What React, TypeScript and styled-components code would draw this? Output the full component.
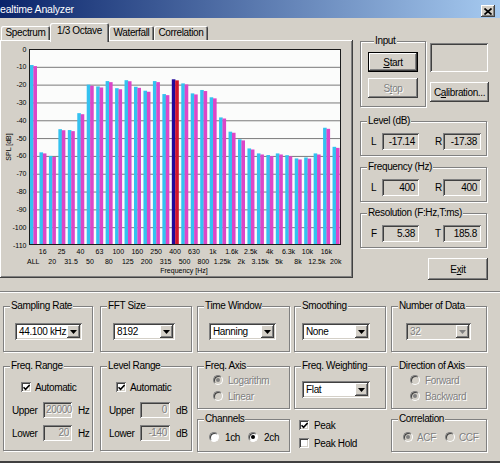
import React from 'react'
import styled, { createGlobalStyle, css } from 'styled-components'

const FONT = `"Liberation Sans", Arial, sans-serif`
const face = '#d4d0c8'
const shade = '#808080'
const dark = '#404040'

const GlobalStyle = createGlobalStyle`
  html, body { margin: 0; padding: 0; background: ${face}; }
  body { font-family: ${FONT}; font-size: 10px; letter-spacing: -0.35px; color: #000; }
  * { box-sizing: border-box; }
`

const raised = css`
  box-shadow: inset -1px -1px 0 ${dark}, inset 1px 1px 0 #fff, inset -2px -2px 0 ${shade};
`
const sunken = css`
  box-shadow: inset 1px 1px 0 ${shade}, inset -1px -1px 0 #fff, inset 2px 2px 0 ${dark}, inset -2px -2px 0 ${face};
`
const grayed = css`
  color: ${shade};
  text-shadow: 1px 1px 0 #fff;
`

const Window = styled.div`
  width: 500px;
  height: 463px;
  overflow: hidden;
  background: ${face};
  display: flex;
  flex-direction: column;
  border-bottom: 2px solid ${dark};
`

const TitleBar = styled.div`
  height: 18px;
  flex: none;
  display: flex;
  align-items: center;
  justify-content: space-between;
  padding-right: 5px;
  background: linear-gradient(to right, #0a246a, #a6caf0);
`

const Title = styled.span`
  color: #fff;
  font-size: 10.5px;
  letter-spacing: -0.2px;
  line-height: 18px;
`

const CloseButton = styled.div`
  width: 14px;
  height: 12px;
  margin-top: 4px;
  background: ${face};
  ${raised};
  display: flex;
  align-items: center;
  justify-content: center;
`

const Main = styled.div`
  height: 273px;
  flex: none;
  display: flex;
`

const TabColumn = styled.div`
  width: 353px;
  flex: none;
  padding-top: 4px;
  display: flex;
  flex-direction: column;
`

const TabStrip = styled.div`
  height: 18px;
  display: flex;
  align-items: flex-end;
  padding-left: 1px;
  position: relative;
  z-index: 1;
`

const Tab = styled.div<{ $active?: boolean; $w: number }>`
  width: ${p => p.$w}px;
  height: ${p => (p.$active ? 19 : 14)}px;
  margin-bottom: ${p => (p.$active ? -2 : 0)}px;
  padding-bottom: ${p => (p.$active ? 3 : 0)}px;
  background: ${face};
  border-radius: 2px 2px 0 0;
  box-shadow: inset 1px 1px 0 #fff, inset -1px 0 0 ${dark}, inset -2px 0 0 ${shade};
  display: flex;
  align-items: center;
  justify-content: center;
  line-height: 12px;
  white-space: nowrap;
`

const TabPanel = styled.div`
  height: 238px;
  padding: 2px;
  background: ${face};
  ${raised};
`

const ChartSvg = styled.svg`
  display: block;
  font-family: ${FONT};
  letter-spacing: 0;
`

const SideColumn = styled.div`
  flex: 1;
  padding: 17px 0 0 7px;
  display: flex;
  flex-direction: column;
`

const InputRow = styled.div`
  display: flex;
  align-items: flex-start;
`

const Stack = styled.div<{ $ml?: number; $pt?: number }>`
  display: flex;
  flex-direction: column;
  align-items: flex-start;
  margin-left: ${p => p.$ml ?? 0}px;
  padding-top: ${p => p.$pt ?? 0}px;
`

const Group = styled.fieldset<{ $w: number; $h: number; $mt?: number; $pl?: number }>`
  margin: ${p => p.$mt ?? 0}px 0 0 0;
  padding: 0 0 0 ${p => p.$pl ?? 0}px;
  min-width: 0;
  width: ${p => p.$w}px;
  height: ${p => p.$h}px;
  border: 1px solid ${shade};
  box-shadow: 1px 1px 0 #fff, inset 1px 1px 0 #fff;
`

const Legend = styled.legend`
  margin-left: 6px;
  padding: 0 1px;
  line-height: 12px;
  font-size: 10px;
  background: ${face};
  white-space: nowrap;
`

const Button = styled.button<{ $w: number; $h: number; $mt?: number; $isDefault?: boolean }>`
  width: ${p => p.$w}px;
  height: ${p => p.$h}px;
  margin-top: ${p => p.$mt ?? 0}px;
  padding: 0;
  border: none;
  font-family: ${FONT};
  font-size: 10px;
  letter-spacing: -0.35px;
  color: #000;
  white-space: nowrap;
  background: ${face};
  ${raised};
  ${p =>
    p.$isDefault &&
    css`
      box-shadow: inset 0 0 0 1px #000, inset -2px -2px 0 ${dark}, inset 2px 2px 0 #fff, inset -3px -3px 0 ${shade};
    `}
  &:disabled {
    ${grayed};
  }
`

const ExitButton = styled(Button)`
  align-self: flex-end;
  margin-right: 12px;
`

const EmptyBox = styled.div`
  width: 58px;
  height: 29px;
  ${sunken};
`

const ReadRow = styled.div`
  display: flex;
  align-items: center;
  padding: 6px 0 0 10px;
`

const ReadLabel = styled.span<{ $w: number; $ml?: number }>`
  width: ${p => p.$w}px;
  margin-left: ${p => p.$ml ?? 0}px;
`

const Readout = styled.div<{ $w: number }>`
  width: ${p => p.$w}px;
  height: 17px;
  line-height: 17px;
  padding: 0 4px;
  text-align: right;
  ${sunken};
`

const Separator = styled.div`
  height: 2px;
  flex: none;
  border-top: 1px solid ${shade};
  border-bottom: 1px solid #fff;
`

const Bottom = styled.div`
  padding: 7px 0 0 3px;
  display: grid;
  grid-template-columns: repeat(5, 97px);
  grid-template-rows: 52px auto;
  row-gap: 8px;
`

const Cell = styled.div`
  display: flex;
  flex-direction: column;
`

const Combo = styled.div<{ $w: number; $ml: number; $mt: number; $off?: boolean }>`
  width: ${p => p.$w}px;
  height: 17px;
  margin: ${p => p.$mt}px 0 0 ${p => p.$ml}px;
  padding: 2px;
  display: flex;
  align-items: center;
  background: ${p => (p.$off ? face : '#fff')};
  ${sunken};
  ${p => p.$off && grayed};
`

const ComboText = styled.span`
  flex: 1;
  padding-left: 2px;
  line-height: 13px;
  white-space: nowrap;
  overflow: hidden;
`

const ComboButton = styled.span`
  width: 13px;
  height: 13px;
  flex: none;
  background: ${face};
  ${raised};
  display: flex;
  align-items: center;
  justify-content: center;
`

const OptionRow = styled.div<{ $pl: number; $mt: number; $gap?: number; $off?: boolean }>`
  height: 12px;
  margin-top: ${p => p.$mt}px;
  padding-left: ${p => p.$pl}px;
  display: flex;
  align-items: center;
  gap: ${p => p.$gap ?? 5}px;
  white-space: nowrap;
  ${p => p.$off && grayed};
`

const OptionText = styled.span<{ $mr?: number }>`
  margin-right: ${p => p.$mr ?? 0}px;
`

const CheckBox = styled.span`
  width: 10px;
  height: 10px;
  flex: none;
  background: #fff;
  ${sunken};
  display: flex;
  align-items: center;
  justify-content: center;
`

const Radio = styled.span<{ $checked?: boolean; $off?: boolean }>`
  position: relative;
  width: 10px;
  height: 10px;
  flex: none;
  border-radius: 50%;
  border: 1px solid;
  border-color: ${shade} #fff #fff ${shade};
  background: ${p => (p.$off ? face : '#fff')};
  box-shadow: inset 1px 1px 0 ${dark};
  &::after {
    content: '';
    display: ${p => (p.$checked ? 'block' : 'none')};
    position: absolute;
    left: 2px;
    top: 2px;
    width: 4px;
    height: 4px;
    border-radius: 50%;
    background: ${p => (p.$off ? shade : '#000')};
  }
`

const EntryRow = styled.div<{ $mt: number }>`
  display: flex;
  align-items: center;
  height: 16px;
  margin-top: ${p => p.$mt}px;
  padding-left: 8px;
`

const EntryLabel = styled.span`
  width: 31px;
`

const Entry = styled.div<{ $w: number }>`
  width: ${p => p.$w}px;
  height: 16px;
  line-height: 16px;
  padding: 0 3px;
  text-align: right;
  ${sunken};
  ${grayed};
`

const Unit = styled.span`
  margin-left: 6px;
`

const Arrow: React.FC<{ off?: boolean }> = ({ off }) => (
  <svg width="7" height="4" viewBox="0 0 7 4">
    <polygon points="0,0 7,0 3.5,4" fill={off ? shade : '#000'} />
  </svg>
)

const Check: React.FC = () => (
  <svg width="7" height="7" viewBox="0 0 7 7">
    <path d="M0.5 3.2 L2.6 5.4 L6.6 1" stroke="#000" strokeWidth="1.6" fill="none" />
  </svg>
)

const Select: React.FC<{ w: number; ml: number; mt: number; value: string; off?: boolean }> = ({ w, ml, mt, value, off }) => (
  <Combo $w={w} $ml={ml} $mt={mt} $off={off}>
    <ComboText>{value}</ComboText>
    <ComboButton>
      <Arrow off={off} />
    </ComboButton>
  </Combo>
)

const bands = [
  'ALL', '16', '20', '25', '31.5', '40', '50', '63', '80', '100', '125', '160', '200', '250', '315', '400', '500',
  '630', '800', '1k', '1.25k', '1.6k', '2k', '2.5k', '3.15k', '4k', '5k', '6.3k', '8k', '10k', '12.5k', '16k', '20k',
]
const levels = [
  -9, -58, -60, -45, -45.5, -36, -20, -21, -18, -22, -17.5, -21.2, -23.4, -18, -25.3, -17, -19.3, -24.9, -23, -27.1,
  -38.4, -46.4, -50.7, -55.8, -58.6, -59.5, -58.6, -59.6, -61.4, -60.9, -58.6, -44.2, -54.9,
]
const marked = 15

const Chart: React.FC = () => {
  const x0 = 29
  const x1 = 341
  const y0 = 49
  const y1 = 245
  const slot = (x1 - x0) / bands.length
  const yOf = (db: number) => y0 + (-db * (y1 - y0)) / 110
  const ticks = Array.from({ length: 12 }, (_, i) => -i * 10)

  return (
    <ChartSvg width={349} height={234} viewBox="2 42 349 234">
      <rect x={x0} y={y0} width={x1 - x0} height={y1 - y0} fill="#fbfcfb" />
      {ticks.slice(1, 11).map(t => (
        <line key={t} x1={x0} x2={x1} y1={yOf(t) + 0.5} y2={yOf(t) + 0.5} stroke="#7a7a7a" strokeWidth="1" />
      ))}
      {levels.map((l, i) => {
        const sx = x0 + slot * i
        const a = yOf(l)
        const b = yOf(l - 0.6)
        return (
          <g key={i}>
            <rect x={sx + 1} y={a} width={3.6} height={y1 - a} fill={i === marked ? '#22089a' : '#34c2f0'} />
            <rect x={sx + 4.4} y={b} width={3.6} height={y1 - b} fill={i === marked ? '#d0142a' : '#dc46c8'} />
          </g>
        )
      })}
      <rect x={x0 + 0.5} y={y0 + 0.5} width={x1 - x0 - 1} height={y1 - y0 - 1} fill="none" stroke="#1c1c1c" />
      {ticks.map(t => (
        <text key={t} x={26.5} y={yOf(t) + 2.5} fontSize="7" textAnchor="end" fill="#000">
          {t}
        </text>
      ))}
      <text transform="translate(11 147) rotate(-90)" fontSize="7" textAnchor="middle" fill="#000">
        SPL [dB]
      </text>
      {bands.map((b, i) => (
        <text
          key={b}
          x={x0 + slot * (i + 0.5) - 0.5}
          y={i % 2 ? 254 : 264}
          fontSize="7"
          textAnchor="middle"
          fill="#000"
        >
          {b}
        </text>
      ))}
      <text x={184} y={273} fontSize="7" textAnchor="middle" fill="#000">
        Frequency [Hz]
      </text>
    </ChartSvg>
  )
}

export default function App() {
  return (
    <>
      <GlobalStyle />
      <Window>
        <TitleBar>
          <Title>ealtime Analyzer</Title>
          <CloseButton>
            <svg width="8" height="7" viewBox="0 0 8 7">
              <path d="M0.5 0.5 L7.5 6.5 M7.5 0.5 L0.5 6.5" stroke="#000" strokeWidth="1.7" />
            </svg>
          </CloseButton>
        </TitleBar>

        <Main>
          <TabColumn>
            <TabStrip>
              <Tab $w={49}>Spectrum</Tab>
              <Tab $w={59} $active>
                1/3 Octave
              </Tab>
              <Tab $w={45}>Waterfall</Tab>
              <Tab $w={54}>Correlation</Tab>
            </TabStrip>
            <TabPanel>
              <Chart />
            </TabPanel>
          </TabColumn>

          <SideColumn>
            <InputRow>
              <Group $w={66} $h={72} $pl={7}>
                <Legend>Input</Legend>
                <Button $w={50} $h={20} $mt={5} $isDefault>
                  <u>S</u>tart
                </Button>
                <Button $w={50} $h={20} $mt={6} disabled>
                  S<u>t</u>op
                </Button>
              </Group>
              <Stack $ml={4} $pt={8}>
                <EmptyBox />
                <Button $w={59} $h={20} $mt={10}>
                  C<u>a</u>libration...
                </Button>
              </Stack>
            </InputRow>

            <Group $w={127} $h={41} $mt={8}>
              <Legend>Level (dB)</Legend>
              <ReadRow>
                <ReadLabel $w={11}>L</ReadLabel>
                <Readout $w={37}>-17.14</Readout>
                <ReadLabel $w={8} $ml={16}>R</ReadLabel>
                <Readout $w={38}>-17.38</Readout>
              </ReadRow>
            </Group>
            <Group $w={127} $h={41} $mt={5}>
              <Legend>Frequency (Hz)</Legend>
              <ReadRow>
                <ReadLabel $w={11}>L</ReadLabel>
                <Readout $w={37}>400</Readout>
                <ReadLabel $w={8} $ml={16}>R</ReadLabel>
                <Readout $w={38}>400</Readout>
              </ReadRow>
            </Group>
            <Group $w={127} $h={41} $mt={5}>
              <Legend>Resolution (F:Hz,T:ms)</Legend>
              <ReadRow>
                <ReadLabel $w={11}>F</ReadLabel>
                <Readout $w={37}>5.38</Readout>
                <ReadLabel $w={8} $ml={16}>T</ReadLabel>
                <Readout $w={38}>185.8</Readout>
              </ReadRow>
            </Group>
            <ExitButton $w={60} $h={22} $mt={10}>
              E<u>x</u>it
            </ExitButton>
          </SideColumn>
        </Main>

        <Separator />

        <Bottom>
          <Group $w={90} $h={52}>
            <Legend>Sampling Rate</Legend>
            <Select w={67} ml={11} mt={11} value="44.100 kHz" />
          </Group>
          <Group $w={92} $h={52}>
            <Legend>FFT Size</Legend>
            <Select w={62} ml={12} mt={11} value="8192" />
          </Group>
          <Group $w={93} $h={52}>
            <Legend>Time Window</Legend>
            <Select w={67} ml={11} mt={11} value="Hanning" />
          </Group>
          <Group $w={92} $h={52}>
            <Legend>Smoothing</Legend>
            <Select w={68} ml={7} mt={11} value="None" />
          </Group>
          <Group $w={96} $h={52}>
            <Legend>Number of Data</Legend>
            <Select w={65} ml={14} mt={11} value="32" off />
          </Group>

          <Group $w={90} $h={91}>
            <Legend>Freq. Range</Legend>
            <OptionRow $pl={17} $mt={9} $gap={4}>
              <CheckBox>
                <Check />
              </CheckBox>
              <OptionText>Automatic</OptionText>
            </OptionRow>
            <EntryRow $mt={9}>
              <EntryLabel>Upper</EntryLabel>
              <Entry $w={29}>20000</Entry>
              <Unit>Hz</Unit>
            </EntryRow>
            <EntryRow $mt={7}>
              <EntryLabel>Lower</EntryLabel>
              <Entry $w={29}>20</Entry>
              <Unit>Hz</Unit>
            </EntryRow>
          </Group>
          <Group $w={92} $h={91}>
            <Legend>Level Range</Legend>
            <OptionRow $pl={15} $mt={9} $gap={4}>
              <CheckBox>
                <Check />
              </CheckBox>
              <OptionText>Automatic</OptionText>
            </OptionRow>
            <EntryRow $mt={9}>
              <EntryLabel>Upper</EntryLabel>
              <Entry $w={30}>0</Entry>
              <Unit>dB</Unit>
            </EntryRow>
            <EntryRow $mt={7}>
              <EntryLabel>Lower</EntryLabel>
              <Entry $w={30}>-140</Entry>
              <Unit>dB</Unit>
            </EntryRow>
          </Group>
          <Cell>
            <Group $w={93} $h={49}>
              <Legend>Freq. Axis</Legend>
              <OptionRow $pl={15} $mt={2} $off>
                <Radio $checked $off />
                <OptionText>Logarithm</OptionText>
              </OptionRow>
              <OptionRow $pl={15} $mt={4} $off>
                <Radio $off />
                <OptionText>Linear</OptionText>
              </OptionRow>
            </Group>
            <Group $w={93} $h={39} $mt={4}>
              <Legend>Channels</Legend>
              <OptionRow $pl={11} $mt={6} $gap={6}>
                <Radio />
                <OptionText $mr={2}>1ch</OptionText>
                <Radio $checked />
                <OptionText>2ch</OptionText>
              </OptionRow>
            </Group>
          </Cell>
          <Cell>
            <Group $w={92} $h={49}>
              <Legend>Freq. Weighting</Legend>
              <Select w={68} ml={7} mt={9} value="Flat" />
            </Group>
            <OptionRow $pl={5} $mt={10}>
              <CheckBox>
                <Check />
              </CheckBox>
              <OptionText>Peak</OptionText>
            </OptionRow>
            <OptionRow $pl={5} $mt={6}>
              <CheckBox />
              <OptionText>Peak Hold</OptionText>
            </OptionRow>
          </Cell>
          <Cell>
            <Group $w={96} $h={49}>
              <Legend>Direction of Axis</Legend>
              <OptionRow $pl={18} $mt={2} $off>
                <Radio $off />
                <OptionText>Forward</OptionText>
              </OptionRow>
              <OptionRow $pl={18} $mt={4} $off>
                <Radio $checked $off />
                <OptionText>Backward</OptionText>
              </OptionRow>
            </Group>
            <Group $w={96} $h={39} $mt={4}>
              <Legend>Correlation</Legend>
              <OptionRow $pl={11} $mt={6} $gap={4} $off>
                <Radio $checked $off />
                <OptionText $mr={5}>ACF</OptionText>
                <Radio $off />
                <OptionText>CCF</OptionText>
              </OptionRow>
            </Group>
          </Cell>
        </Bottom>
      </Window>
    </>
  )
}
